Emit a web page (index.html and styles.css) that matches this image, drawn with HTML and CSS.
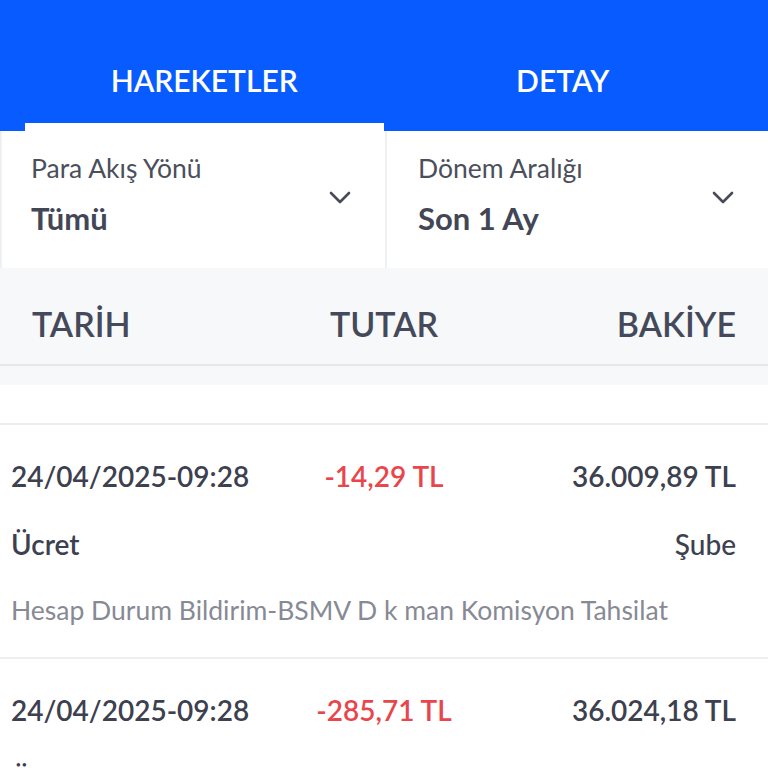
FILE: index.html
```html
<!DOCTYPE html>
<html lang="tr">
<head>
    <meta charset="UTF-8">
    <meta name="viewport" content="width=device-width, initial-scale=1.0">
    <title>Hesap Hareketleri</title>
    <link rel="stylesheet" href="styles.css">
</head>
<body>
    <div class="page">
        <div class="tabs">
            <div class="tab active">
                <span class="tab-label">HAREKETLER</span>
                <span class="tab-bar"></span>
            </div>
            <div class="tab">
                <span class="tab-label">DETAY</span>
                <span class="tab-bar"></span>
            </div>
        </div>

        <div class="filters">
            <div class="filter">
                <div class="filter-text">
                    <div class="filter-label">Para Akış Yönü</div>
                    <div class="filter-value">Tümü</div>
                </div>
                <svg class="chevron" width="22" height="14" viewBox="0 0 22 14">
                    <path d="M2 2 L11 11 L20 2" fill="none" stroke="#474b58" stroke-width="2.6" stroke-linecap="round" stroke-linejoin="round"/>
                </svg>
            </div>
            <div class="filter">
                <div class="filter-text">
                    <div class="filter-label">Dönem Aralığı</div>
                    <div class="filter-value">Son 1 Ay</div>
                </div>
                <svg class="chevron" width="22" height="14" viewBox="0 0 22 14">
                    <path d="M2 2 L11 11 L20 2" fill="none" stroke="#474b58" stroke-width="2.6" stroke-linecap="round" stroke-linejoin="round"/>
                </svg>
            </div>
        </div>

        <div class="table-head">
            <span>TARİH</span>
            <span>TUTAR</span>
            <span class="right">BAKİYE</span>
        </div>
        <div class="head-gap"></div>

        <div class="list">
            <div class="list-top"></div>

            <div class="row">
                <div class="row-main">
                    <span class="date">24/04/2025-09:28</span>
                    <span class="amount">-14,29 TL</span>
                    <span class="balance">36.009,89 TL</span>
                </div>
                <div class="row-sub">
                    <span>Ücret</span>
                    <span class="channel">Şube</span>
                </div>
                <div class="row-desc">Hesap Durum Bildirim-BSMV D k man Komisyon Tahsilat</div>
            </div>

            <div class="row">
                <div class="row-main">
                    <span class="date">24/04/2025-09:28</span>
                    <span class="amount">-285,71 TL</span>
                    <span class="balance">36.024,18 TL</span>
                </div>
                <div class="row-sub">
                    <span>Ücret</span>
                    <span class="channel">Şube</span>
                </div>
                <div class="row-desc">Hesap Durum Bildirim-BSMV D k man Komisyon Tahsilat</div>
            </div>
        </div>
    </div>
</body>
</html>
```

FILE: styles.css
```css
body {
    margin: 0;
    font-family: Lato, "Noto Sans", sans-serif;
    background-color: #f7f8fa;
    color: #3c404f;
}
.page {
    width: 768px;
    height: 768px;
    overflow: hidden;
}

/* tabs */
.tabs {
    background-color: #085cff;
    display: grid;
    grid-template-columns: 1fr 1fr;
    padding: 0 26px 0 25px;
    height: 131px;
}
.tab {
    display: flex;
    flex-direction: column;
    align-items: center;
}
.tab-label {
    color: #ffffff;
    font-size: 30px;
    font-weight: 600;
    line-height: 36px;
    margin-top: 62px;
    flex: 1;
}
.tab-bar {
    align-self: stretch;
    height: 8px;
}
.tab.active .tab-bar {
    background-color: #ffffff;
}

/* filters */
.filters {
    display: grid;
    grid-template-columns: 385px 1fr;
    gap: 2px;
    background-color: #eef0f3;
    height: 137px;
}
.filter {
    background-color: #ffffff;
    display: flex;
    align-items: center;
    justify-content: space-between;
    padding: 0 34px 0 31px;
}
.filter:first-child {
    box-shadow: inset 3px 0 3px -2px #e2e4e8;
}
.filter-text {
    margin-top: -12px;
}
.filter-label {
    font-size: 26.5px;
    line-height: 30px;
    color: #4b4f5b;
}
.filter-value {
    font-size: 31px;
    font-weight: 700;
    line-height: 34px;
    margin-top: 18px;
    color: #434755;
}
.chevron {
    margin-top: -4px;
}

/* table header */
.table-head {
    display: grid;
    grid-template-columns: 1fr auto 1fr;
    align-items: center;
    height: 82px;
    padding: 14px 32px 0;
    font-size: 34px;
    font-weight: 600;
    color: #454a5a;
    border-bottom: 2px solid #e5e7eb;
    background-color: #f7f8fa;
}
.right {
    text-align: right;
}
.head-gap {
    height: 19px;
}

/* list */
.list {
    background-color: #ffffff;
}
.list-top {
    height: 38px;
}
.row {
    border-top: 2px solid #eceef1;
    padding: 34px 11px 30px;
}
.row-main {
    display: grid;
    grid-template-columns: 1fr auto 1fr;
    align-items: center;
    font-size: 28px;
    font-weight: 600;
    line-height: 34px;
}
.amount {
    color: #e8464c;
}
.balance {
    text-align: right;
    padding-right: 21px;
}
.row-sub {
    display: flex;
    justify-content: space-between;
    margin-top: 34px;
    font-size: 28px;
    font-weight: 600;
    line-height: 34px;
}
.channel {
    font-weight: 500;
    padding-right: 21px;
}
.row-desc {
    margin-top: 32px;
    font-size: 26.5px;
    line-height: 34px;
    color: #878a95;
}
```
